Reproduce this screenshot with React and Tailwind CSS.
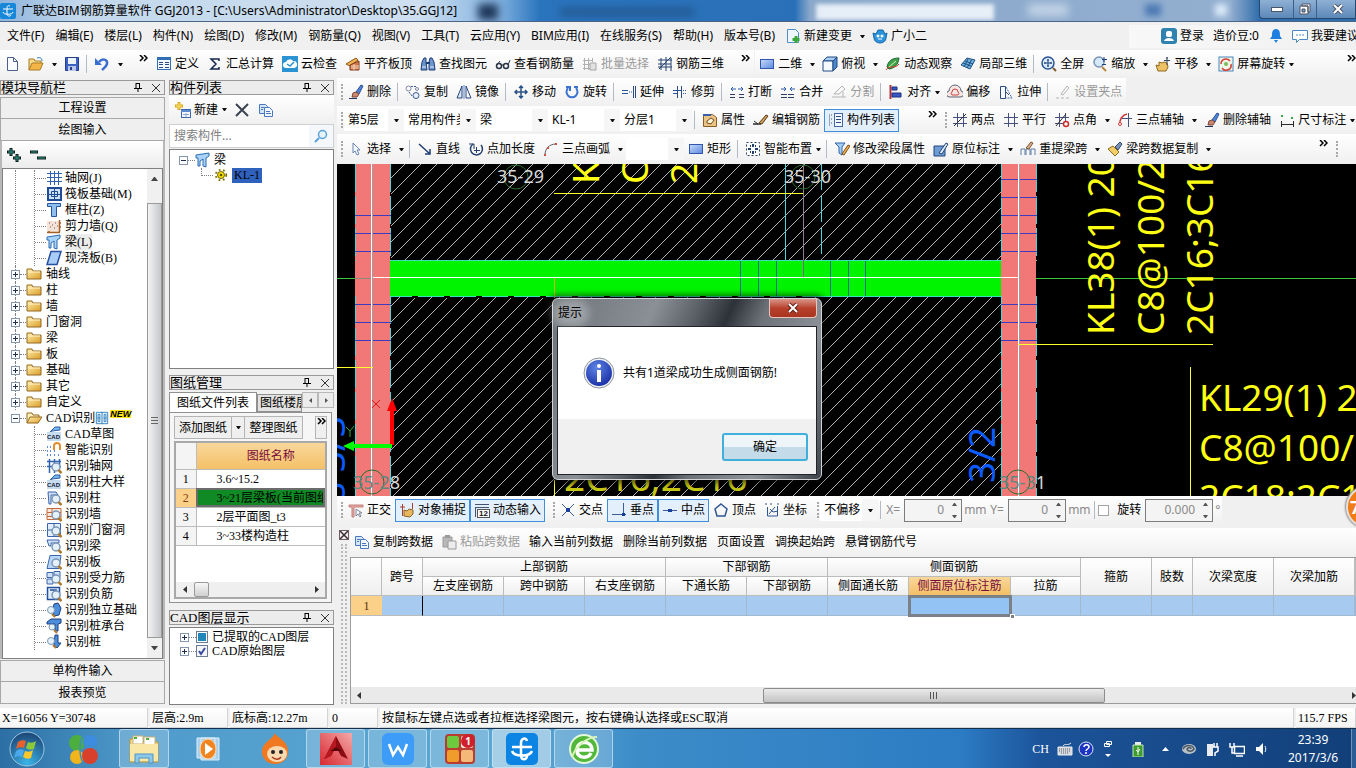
import { Fragment } from "react";

const lens = (
  <>
    <circle cx="10" cy="9" r="4" fill="#e4f1fb" stroke="#7c96b4" strokeWidth="1.500" />
    <path d="M12.500 12l3 3" stroke="#b07a2c" strokeWidth="2.500" />
  </>
);
const brush = (
  <>
    <path d="M1 14.500h8" stroke="#23335c" />
    <path d="M8 8l5-7 2 1-4 8z" fill="#4d86d8" stroke="#2d4f94" />
    <path d="M4 13l1-4 3-1 3 2-2 3z" fill="#c98a74" stroke="#7c4435" />
  </>
);
const copyDoc = (
  <>
    <path d="M1.500 2.500h6l2 2v7h-8z" fill="#d5e6fa" stroke="#4a78c0" />
    <path d="M6.500 5.500h5l3 3v6h-8z" fill="#f2f8ff" stroke="#4a78c0" />
    <path d="M8 9.500h4M8 11.500h5M3 5.500h3M3 7.500h2" stroke="#4a78c0" />
  </>
);
const axis = <path d="M5.500 1v14M11.500 1v14M1 5.500h14M1 11.500h14" stroke="#45507c" fill="none" />;
const cad = (
  <>
    <path d="M2 8L9 1l5 0v3l-8 1z" fill="#79b4ec" stroke="#2a5ca8" />
    <rect x="1" y="6" width="14" height="9" fill="#c9dbee" />
    <text x="1" y="13" fontSize="6" fontWeight="bold" fontFamily="'Liberation Sans', sans-serif" fill="#111c33">CAD</text>
  </>
);
const blueRect = <rect x="1.500" y="3.500" width="13" height="9" fill="url(#blueFill)" stroke="#3156b0" />;

const icons = {
  file: <path d="M3.500 1.500h6l4 4v9h-10zM9.500 1.500v4h4" fill="#f8fbff" stroke="#4b5f8a" />,
  open: (
    <>
      <path d="M1 14V3h5l1 2h6v3" fill="#f7dc8c" stroke="#a97b25" />
      <path d="M1 14l3-7h11l-3 7z" fill="#f3b647" stroke="#a97b25" />
      <path d="M9 2c3-1 5 0 5 3" fill="none" stroke="#2a7fb8" />
    </>
  ),
  save: (
    <>
      <path d="M1.500 1.500h13v13h-13z" fill="#3c62c4" stroke="#24408c" />
      <path d="M4 2h8v6H4z" fill="#eef3fc" />
      <path d="M4 10h8v5H4z" fill="#b9c8e8" />
      <path d="M6 11h2v3H6z" fill="#24408c" />
    </>
  ),
  undo: (
    <>
      <path d="M5 6c3-4 9-3 8 2-1 3-3 4-5 6" fill="none" stroke="#3a6fd0" strokeWidth="2.500" />
      <path d="M1 2v7h7z" fill="#3a6fd0" />
    </>
  ),
  define: (
    <>
      <rect x="1.500" y="1.500" width="13" height="12" fill="#f4f9ff" stroke="#2f6fb4" />
      <path d="M1 3h14" stroke="#2f6fb4" strokeWidth="2" />
      <path d="M3 6.500h4M3 8.500h4M3 11.500h4M9 6.500h4M9 8.500h4M9 11.500h4" stroke="#274a84" />
    </>
  ),
  sum: <path d="M12 5V3H4l5 5-5 5h8v-2" fill="none" stroke="#16294c" strokeWidth="1.500" />,
  cloud: (
    <>
      <rect width="16" height="16" fill="#2b93d1" />
      <path d="M4 12a3 3 0 010-6 4 4 0 017-1 3.500 3.500 0 011 7z" fill="#fff" />
      <path d="M5 8l3 2 4-4" fill="none" stroke="#2b93d1" strokeWidth="1.500" />
    </>
  ),
  flush: (
    <>
      <path d="M1 8l10-6 2 2-8 6z" fill="#f0b354" stroke="#8f5a14" />
      <path d="M5 14V9l9-4v9z" fill="#d4784c" stroke="#7e3c1c" />
      <path d="M6 10h8M6 12h8M9 8v6" stroke="#f4d6c0" />
    </>
  ),
  find: (
    <>
      <path d="M4 2h2v4l1 8H1l1-8zM10 2h2l2 4 1 8H9V6z" fill="#6c96cc" stroke="#1e3c74" />
      <path d="M6 7h4" stroke="#1e3c74" strokeWidth="2" />
      <path d="M2 11h4M10 11h4" stroke="#dce8f8" />
    </>
  ),
  glasses: (
    <>
      <circle cx="4" cy="10" r="2.500" fill="none" stroke="#2a3646" strokeWidth="1.500" />
      <circle cx="11" cy="10" r="2.500" fill="none" stroke="#2a3646" strokeWidth="1.500" />
      <path d="M6 9h3M2 9l3-4M13 9l2-5" stroke="#2a3646" fill="none" />
    </>
  ),
  batch: (
    <>
      <path d="M2.500 2v12M6.500 2v12M1 4.500h9M1 8.500h13M1 12.500h9M10.500 2v4" stroke="#b0b0b0" />
      <path d="M8 7h6v7H8z" fill="#e2e2e2" stroke="#a5a5a5" />
    </>
  ),
  rebar3d: <path d="M1 4h14M1 11h14M4 2v12M9 1v14M14 2v13M2 13L14 1M1 8h13" stroke="#26446f" fill="none" />,
  rect: blueRect,
  cube: (
    <>
      <path d="M1 5l4-4h10l-4 4z" fill="#a8cdf2" stroke="#234a84" />
      <path d="M1 5h10v10H1z" fill="#f5faff" stroke="#234a84" />
      <path d="M11 5l4-4v10l-4 4z" fill="#4d8acb" stroke="#234a84" />
    </>
  ),
  orbit: (
    <>
      <path d="M2 11c1-6 5-9 12-9-1 7-4 10-10 11z" fill="#3ea34b" stroke="#1c6430" />
      <path d="M4 11l7-6" stroke="#d6f0c4" />
      <path d="M1 14c2-5 10-1 13-6" stroke="#d04030" fill="none" />
    </>
  ),
  partial: (
    <>
      <path d="M1 9l6-7 8 2-5 9z" fill="#6eb0dc" stroke="#1f4f84" />
      <path d="M3 7l8 3M5 5l8 3M8 3L4 11M12 3L7 12" stroke="#1f4f84" />
    </>
  ),
  full: (
    <>
      <circle cx="7" cy="7" r="6" fill="#dcecfb" stroke="#2a5494" strokeWidth="1.500" />
      <path d="M7 3v8M3 7h8M6 4h2M6 10h2M4 6v2M10 6v2" stroke="#20407c" />
      <path d="M12 12l3 3" stroke="#7c5a2c" strokeWidth="2" />
    </>
  ),
  zoom: (
    <>
      <circle cx="7" cy="6" r="5" fill="#d6e9fa" stroke="#7a94b4" strokeWidth="1.500" />
      <path d="M10 11l4 4" stroke="#b8863c" strokeWidth="2" />
      <path d="M12 1v5M10 3.500h5M10 8.500h4" stroke="#20407c" />
    </>
  ),
  hand: (
    <>
      <path d="M3 15l-2-6 3 1V6l3 1 2-1 3 1 1 4-2 4z" fill="#edc266" stroke="#94691c" />
      <path d="M12 1v8M9 4.500h6M11 2h2" stroke="#35455e" />
    </>
  ),
  spin: (
    <>
      <rect x="1" y="1" width="14" height="14" fill="#eef6e8" stroke="#4886b8" />
      <path d="M3 8a5 5 0 019-3M13 8a5 5 0 01-9 4" fill="none" stroke="#d8413c" strokeWidth="1.500" />
      <circle cx="8" cy="8" r="2" fill="#7cbc58" />
    </>
  ),
  brush,
  copy: (
    <>
      <circle cx="3.500" cy="4.500" r="2.500" fill="none" stroke="#7f8aa0" />
      <circle cx="12" cy="5" r="1.500" fill="none" stroke="#7f8aa0" />
      <circle cx="11" cy="11.500" r="3" fill="#e8f0fa" stroke="#3c5a94" />
      <path d="M6 2.500h5M4 8l3 4" stroke="#3c5a94" strokeDasharray="2 1" />
    </>
  ),
  mirror: (
    <>
      <path d="M6 2v12H1z" fill="#dce8f8" stroke="#2a4780" />
      <path d="M10 2v12h5z" fill="none" stroke="#2a4780" />
      <path d="M8 1v14" stroke="#5c86c4" />
    </>
  ),
  move: <path d="M8 2v12M2 8h12M6 4l2-2 2 2M6 12l2 2 2-2M4 6L2 8l2 2M12 6l2 2-2 2" fill="none" stroke="#2a5286" strokeWidth="1.500" />,
  rotate: <path d="M4 4a5.500 5.500 0 108 0M2 3h4v4M10 3h4" fill="none" stroke="#3b74d0" strokeWidth="2" />,
  extend: (
    <>
      <path d="M1 6.500h6M1 9.500h6" stroke="#2857a0" />
      <path d="M8 8h3" stroke="#2857a0" strokeDasharray="1 1" />
      <path d="M12.500 2v12M14.500 2v12" stroke="#2c4c80" />
    </>
  ),
  trim: (
    <>
      <path d="M5.500 2v12M9.500 2v12" stroke="#2c4c80" />
      <path d="M1 6.500h8M1 9.500h4" stroke="#2857a0" />
      <path d="M11 6.500h4M11 9.500h4" stroke="#2857a0" strokeDasharray="1 1" />
    </>
  ),
  breakAt: (
    <>
      <path d="M1 10.500h5M10 10.500h5M1 13.500h5M10 13.500h5" stroke="#2c3d66" />
      <path d="M7 5H2m2-2L2 5l2 2M9 5h5m-2-2l2 2-2 2" stroke="#2c5ea8" fill="none" />
    </>
  ),
  merge: (
    <>
      <path d="M1 10.500h14M1 13.500h14" stroke="#2c3d66" strokeDasharray="6 1" />
      <path d="M1 5h5M4 3l2 2-2 2M15 5h-5m2-2l-2 2 2 2" stroke="#2c5ea8" fill="none" />
    </>
  ),
  split: <path d="M1 13h14M3 10l8-8 3 3-6 5zM12 8v5" stroke="#b4b4b4" fill="none" />,
  align: (
    <>
      <path d="M2.500 1v14" stroke="#b03040" strokeWidth="2" />
      <path d="M4 3h5v3H4zM4 9h9v4H4z" fill="#3758c0" stroke="#1c2e7c" />
    </>
  ),
  offset: (
    <>
      <path d="M3 13a3 3 0 01-1-6 6 6 0 0112 0 3 3 0 01-1 6z" fill="#f8e6e4" stroke="#5b6474" />
      <path d="M5 11a2 2 0 010-3 3 3 0 016 0 2 2 0 010 3z" fill="none" stroke="#c8443c" />
    </>
  ),
  stretch: (
    <>
      <path d="M2.500 2.500h5v12h-5z" fill="#f8fbff" stroke="#2c4c80" />
      <path d="M8 3l6 11H8" fill="none" stroke="#3c68b4" strokeDasharray="2 1" />
      <path d="M8 8l3 3" stroke="#2c4c80" />
    </>
  ),
  gripSet: <path d="M1 14h3M6 14h3M11 14h3M6 10l6-8 2 2-6 7z" stroke="#b4b4b4" fill="none" />,
  props: (
    <>
      <path d="M1.500 2.500h9l4 3v9h-13z" fill="#eac487" stroke="#8a5b24" />
      <path d="M5 9l4-3 3 2-3 4-4-1z" fill="#fff6dc" stroke="#6f4a1c" />
      <path d="M1 3h8" stroke="#3860a8" strokeWidth="2" />
    </>
  ),
  editBar: (
    <>
      <path d="M0 12h8" stroke="#2a2a2a" strokeWidth="1.500" />
      <path d="M6 11l7-8 2 1-6 8z" fill="#c89c58" stroke="#5c3e18" />
      <path d="M1 9l4 3" stroke="#2a2a2a" />
    </>
  ),
  list: (
    <>
      <path d="M1 3h3M1 7h3M1 11h3M1 5h2M1 9h2M1 13h2" stroke="#4c5a7a" strokeDasharray="1 1" />
      <rect x="6.500" y="1.500" width="8" height="13" fill="#f4f8ff" stroke="#4468a4" />
      <path d="M8 4.500h5M8 7.500h5M8 10.500h5" stroke="#2f4a80" />
    </>
  ),
  twoPoint: <>{axis}<path d="M2 14L14 2" stroke="#2b2b2b" /></>,
  parallel: axis,
  pointAngle: <>{axis}<path d="M2 14L12 2" stroke="#2b2b2b" /><circle cx="12" cy="12" r="2.500" fill="#fff" stroke="#d02c2c" strokeWidth="1.500" /></>,
  threeAxis: (
    <>
      <path d="M11.500 1v14M5 6.500h10" stroke="#45507c" />
      <path d="M3 13c-1-5 2-10 7-11" stroke="#d03838" fill="none" strokeWidth="1.500" />
      <circle cx="3" cy="12" r="1.500" fill="#fff" stroke="#d03838" />
    </>
  ),
  dim: (
    <>
      <path d="M2.500 9v6M14.500 9v6M3 12.500h11" stroke="#2b2b2b" />
      <path d="M2 3h2v2H2zM12 5h2v2h-2z" fill="#3da04c" />
    </>
  ),
  cursor: <path d="M5 2v10l2-2 2 4 2-1-2-4h3z" fill="#f6faff" stroke="#6a84b0" />,
  line: <path d="M2 3l11 10M13 8v5H8" fill="none" stroke="#1f3f74" strokeWidth="1.500" />,
  addLen: (
    <>
      <path d="M5 3a6 6 0 108 1" fill="none" stroke="#24406c" strokeWidth="1.500" />
      <path d="M1 3h5v5M8.500 6v6M6 9.500h6" fill="none" stroke="#24406c" />
    </>
  ),
  arc: (
    <>
      <path d="M2 14C2 8 6 3 13 3" fill="none" stroke="#5c5c5c" />
      <path d="M1 13h2v2H1zM4 6h2v2H4zM12 2h2v2h-2z" fill="#d04c3c" />
    </>
  ),
  smart: (
    <>
      <path d="M1.500 1.500h13v13h-13z" fill="#fff" stroke="#24406c" strokeDasharray="2 2" />
      <path d="M8 3v3M8 10v3M3 8h3M10 8h3M5 5h1M10 5h1M5 11h1M10 11h1" stroke="#24406c" strokeWidth="2" />
    </>
  ),
  beamEdit: (
    <>
      <path d="M1 2h10l-3 4v8l-3-2V6z" fill="#a6cdf2" stroke="#2c66ac" />
      <path d="M8 13l6-9 2 1-6 9z" fill="#f2b44c" stroke="#7c4c14" />
    </>
  ),
  origin: (
    <>
      <path d="M1 5h11v10H1z" fill="#6f9cd4" stroke="#23457c" />
      <path d="M6 12l7-10 2 1-6 10z" fill="#dbe9f8" stroke="#23457c" />
    </>
  ),
  respan: (
    <>
      <path d="M1 14V8h4v6M6 14V8h4v6M11 14V8h4v6" fill="none" stroke="#5f7ca4" />
      <path d="M6 7l5-6 2 1-4 6z" fill="#d8b088" stroke="#7c5430" />
    </>
  ),
  sweep: (
    <>
      <path d="M1 8l5-3 6 6-4 4z" fill="#f2cf68" stroke="#8c6a1c" />
      <path d="M8 6l5-5 2 2-4 6z" fill="#7a92b4" stroke="#33486c" />
    </>
  ),
  ortho: (
    <>
      <path d="M1 3h14v2H6v10H4V5H1z" fill="#e9a8a4" stroke="#c4807c" />
      <path d="M8 7v7l2-2 2 3 1-1-2-3h3z" fill="#fff" stroke="#7c8494" />
    </>
  ),
  snap: (
    <>
      <path d="M1 5h5M3.500 2v12M13.500 1v6" stroke="#a83c30" />
      <path d="M5 14V8l3 1 2-2 4 1v4l-3 3z" fill="#e8b860" stroke="#8c6424" />
    </>
  ),
  dynInput: (
    <>
      <path d="M1 2.500h14M1 5.500h14M1.500 5v10" stroke="#44546c" />
      <rect x="3.500" y="7.500" width="12" height="8" fill="#fff" stroke="#555" />
      <text x="5" y="14" fontSize="8" fontWeight="bold" fontFamily="'Liberation Sans', sans-serif" fill="#111">12</text>
    </>
  ),
  cross: <><path d="M2 2l12 12M14 2L2 14" stroke="#3d5d98" /><path d="M6 6h4v4H6z" fill="#173f9c" /></>,
  perp: <><path d="M12.500 1v12M1 12.500h14" stroke="#3d5d98" /><path d="M11 11h3v3h-3z" fill="#173f9c" /></>,
  mid: <><path d="M1 8.500h14" stroke="#3d5d98" /><path d="M6 7h4v3H6z" fill="#173f9c" /></>,
  penta: <path d="M8 2l6 5-2 7H4L2 7z" fill="none" stroke="#2f5594" strokeWidth="1.500" />,
  coord: (
    <>
      <path d="M3.500 5v9h10M5 12l6-7M6 7l3 3 5-1M13.500 4v10" fill="none" stroke="#2f5594" />
      <path d="M1 2h2M6 2h2M13 2h2" stroke="#2f5594" />
    </>
  ),
  copyDoc,
  paste: (
    <>
      <path d="M2 3h9v10H2z" fill="#b8b8b8" stroke="#9a9a9a" />
      <path d="M7 7h8v8H7z" fill="#ececec" stroke="#9a9a9a" />
      <path d="M4 1h5v3H4z" fill="#9a9a9a" />
    </>
  ),
  newChange: (
    <>
      <path d="M2.500 1.500h8l3 3v10h-11z" fill="#eef7ff" stroke="#4b8fc8" />
      <path d="M11 8v7M7.500 11.500h7" stroke="#3aa53a" strokeWidth="3" />
    </>
  ),
  mascot: (
    <>
      <path d="M1 5l3 1 2-4h5l2 4 2-1-1 5a6 5 0 01-12 0z" fill="#2a93dc" stroke="#1466a4" />
      <circle cx="6" cy="8" r="1.500" fill="#fff" />
      <circle cx="10" cy="8" r="1.500" fill="#fff" />
      <path d="M6 11h4" stroke="#fff" />
    </>
  ),
  login: (
    <>
      <rect width="16" height="16" rx="3" fill="#2f83ae" />
      <rect x="5" y="3" width="6" height="6" rx="2" fill="#fff" />
      <path d="M3 13c1-4 9-4 10 0z" fill="#fff" />
    </>
  ),
  bell: <path d="M8 1c4 0 4 4 4 7l2 3H2l2-3c0-3 0-7 4-7zM6 12h4l-2 3z" fill="#1f7fe0" />,
  chat: (
    <>
      <path d="M.5 2.500h15v9h-8l-3 3v-3h-4z" fill="#fff" stroke="#4a87c4" />
      <path d="M4 7h9" stroke="#4a87c4" strokeDasharray="2 1" />
    </>
  ),
  newItem: (
    <>
      <path d="M4 0v8M0 4h8" stroke="#d8a820" strokeWidth="3" />
      <path d="M4 1v6M1 4h6" stroke="#ffe870" />
      <rect x="6.500" y="7.500" width="9" height="8" fill="#f4f8ff" stroke="#3c68b0" />
      <path d="M6 9h10" stroke="#5c8ad0" strokeWidth="2" />
      <path d="M8 12.500h6M11 11v4" stroke="#8caad8" />
    </>
  ),
  del: <path d="M2 2l12 12M14 2L2 14" stroke="#3b4250" strokeWidth="2" />,
  search: (
    <>
      <circle cx="9.500" cy="6.500" r="4" fill="#e6f3fc" stroke="#5aa2d8" strokeWidth="1.500" />
      <path d="M6 10l-4 4" stroke="#5aa2d8" strokeWidth="2" />
    </>
  ),
  folder: (
    <>
      <path d="M1 13V3h5l1 2h8v8z" fill="url(#folderFill)" stroke="#94691f" />
      <path d="M2 6h12" stroke="#fff3c4" />
    </>
  ),
  folderOpen: (
    <>
      <path d="M1 13V3h5l1 2h6v3" fill="#fff2bf" stroke="#94691f" />
      <path d="M1 13l3-6h12l-4 6z" fill="url(#folderFill)" stroke="#94691f" />
    </>
  ),
  grid: <path d="M4.500 1v14M8.500 1v14M12.500 1v14M1 3.500h15M1 7.500h15M1 11.500h15" stroke="#2f62b0" />,
  raft: (
    <>
      <rect x="2" y="2" width="13" height="12" fill="#cfe2fa" stroke="#1f4c94" strokeWidth="2" />
      <path d="M5.500 5.500h6v5h-6zM8.500 2v12M2 8.500h12" fill="none" stroke="#1f4c94" />
    </>
  ),
  column: <path d="M1.500 1.500h13v3h-4v10h-5v-10h-4z" fill="#8fbff0" stroke="#2455a0" />,
  wall: (
    <>
      <path d="M1 3h12v11H1z" fill="#f6e3d6" />
      <path d="M1 14.500h13M13.500 2v12M13 5h2M13 9h2M3 13v2" stroke="#a5602c" strokeWidth="1.500" />
      <path d="M3 5h1M6 7h1M9 5h1M4 9h1M8 10h1M11 8h1" stroke="#5b5b78" />
    </>
  ),
  beam: <path d="M1 3l13-2v3l-3 2v9l-3-1V7L5 9v5H3V6H1z" fill="#a8d2f7" stroke="#2a6cb4" />,
  slab: <path d="M5 1.500h10L11 14.500H1z" fill="#a9cdf6" stroke="#2650a0" strokeWidth="1.500" />,
  cad,
  magnet: (
    <>
      <path d="M1 5h1M4 5h1M1 9h1M4 9h1M8 9h1M1 13h1M4 13h1M8 13h1M12 13h1" stroke="#2f62d0" strokeWidth="1.500" />
      <path d="M8 8V4a3 3 0 016 0v4" fill="none" stroke="#e09030" strokeWidth="2" />
    </>
  ),
  idGrid: <><path d="M3.500 1v14M8.500 1v14M1 3.500h14M1 8.500h14M13.500 1v6" stroke="#2f62b0" strokeWidth="1.500" />{lens}</>,
  idColumn: <><path d="M2 2h8l2 3H5v9H3z" fill="#cfe2fa" stroke="#3a64ac" />{lens}</>,
  idWall: <><path d="M1 2.500h14v11H1zM1 6.500h14M1 10.500h14M6 2v4M10 6v4" fill="#fae8dc" stroke="#c06a3c" />{lens}</>,
  idDoor: <><path d="M1.500 1.500h13v13h-13zM8 1v14M1 8h14" fill="#e2eefc" stroke="#3a64ac" />{lens}</>,
  idBeam: <><path d="M1 2h12v3H5v3H3z" fill="#cfe2fa" stroke="#3a64ac" />{lens}</>,
  idSlab: <><path d="M4 1.500h11l-2 13H1z" fill="#b8d7f8" stroke="#3a64ac" />{lens}</>,
  idForce: <><path d="M1 2.500h6v5H1zM8 1.500h6v6H8zM1 9h6v5H1z" fill="#cfe2fa" stroke="#3a64ac" />{lens}</>,
  idNeg: <><path d="M1.500 1.500h12v12h-12zM4 4h6v6" fill="#e2eefc" stroke="#24509c" strokeWidth="1.500" />{lens}</>,
  idFound: (
    <>
      <path d="M7 7l1-5 4-1 3 5-2 7-5 1z" fill="#4c8edc" stroke="#1c3f80" />
      <circle cx="5" cy="8" r="3.500" fill="#e4f1fb" stroke="#7c96b4" />
      <path d="M6 12l3 3" stroke="#b07a2c" strokeWidth="2" />
    </>
  ),
  idCap: (
    <>
      <path d="M1 4l4-3h10v4l-3 1v7H9V6H1z" fill="#4c8edc" stroke="#1c3f80" />
      <circle cx="6" cy="9" r="3" fill="#e4f1fb" stroke="#7c96b4" />
      <path d="M8 12l3 3" stroke="#b07a2c" strokeWidth="2" />
    </>
  ),
  idPile: (
    <>
      <path d="M9 1h3v8h3l-4 5-3-3z" fill="#4c8edc" stroke="#1c3f80" />
      <circle cx="5" cy="7" r="3.500" fill="#e4f1fb" stroke="#7c96b4" />
      <path d="M7 11l3 3" stroke="#b07a2c" strokeWidth="2" />
    </>
  ),
  gear: (
    <>
      <circle cx="8" cy="8" r="4" fill="#f5e000" stroke="#5c5200" />
      <circle cx="8" cy="8" r="6" fill="none" stroke="#7c7000" strokeWidth="2" strokeDasharray="2 3" />
      <circle cx="8" cy="8" r="1.500" fill="#5c5200" />
    </>
  ),
  book: <path d="M1.500 1.500h13v13h-13zM8 1v14M3.500 4v8h2V4zM10.500 4v8h2V4zM3 8h3M10 8h3" fill="#dff0fb" stroke="#2d7cb8" />,
};

function Icon({ name, className = "size-4" }) {
  return (
    <svg viewBox="0 0 16 16" fill="none" aria-hidden="true" className={`shrink-0 ${className}`}>
      {icons[name]}
    </svg>
  );
}

function Caret() {
  return (
    <svg viewBox="0 0 5 3" className="h-[3px] w-[5px] shrink-0" aria-hidden="true">
      <path d="M0 0h5L3 3H2z" fill="#111" />
    </svg>
  );
}

function Tool({ icon, label, active, disabled, arrow }) {
  return (
    <>
      <button
        type="button"
        aria-label={label || icon}
        disabled={disabled}
        className={`flex h-[23px] shrink-0 items-center gap-[3px] px-1 whitespace-nowrap ${
          active ? "bg-[#e3effb] outline-1 -outline-offset-1 outline-[#3f8fdd]" : ""
        } ${disabled ? "text-[#9a9a9a]" : ""}`}
      >
        <Icon name={icon} />
        {label}
      </button>
      {arrow && (
        <button
          type="button"
          aria-label="更多"
          className={`flex h-5 shrink-0 items-center ${arrow === "tight" ? "w-2" : "w-3 justify-center"}`}
        >
          <Caret />
        </button>
      )}
    </>
  );
}

const Sep = () => <span className="mx-[2px] h-[18px] w-px shrink-0 border-l border-[#b4bac4] pr-px" />;
const Grip = ({ className = "ml-1" }) => (
  <span className={`mr-px h-4 w-[2px] shrink-0 border-l-2 border-dotted border-[#a8a8a8] ${className}`} />
);
const Chevrons = ({ className = "w-[26px] pr-1" }) => (
  <button type="button" aria-label="展开" className={`flex h-5 shrink-0 items-start justify-end ${className}`}>
    <svg viewBox="0 0 9 7" className="mt-px h-[7px] w-[9px]" aria-hidden="true">
      <path d="M1 0l3 3-3 3M5 0l3 3-3 3" fill="none" stroke="#000" strokeWidth="1.500" />
    </svg>
  </button>
);

function Combo({ label, value, className }) {
  return (
    <span className={`flex h-[22px] shrink-0 items-center bg-white ${className}`}>
      <select aria-label={label} className="h-full w-full min-w-0 appearance-none overflow-hidden pl-1 outline-none">
        <option>{value}</option>
      </select>
      <span className="flex h-full w-4 shrink-0 items-center justify-center bg-[#f6f6f6]">
        <Caret />
      </span>
    </span>
  );
}

// "|" is a separator, the third field marks the kind of drop arrow
function Tools({ items }) {
  return items.map((item, i) =>
    item === "|" ? (
      <Sep key={i} />
    ) : (
      <Tool key={i} icon={item[0]} label={item[1]} arrow={item[2]} disabled={item[3]} />
    )
  );
}

const bar = "flex shrink-0 items-center bg-gradient-to-b from-white to-[#f0f0f0]";
const song = "[font-family:'Liberation_Serif','Noto_Sans_CJK_SC',serif]";
const yahei = "[font-family:'Noto_Sans','Noto_Sans_CJK_SC',sans-serif]";

function TitleBar() {
  return (
    <header className="relative flex h-[22px] shrink-0 items-center overflow-hidden border-b border-[#4b6487] bg-[linear-gradient(90deg,#8fb4dc_0,#c3d8ec_80px,#cddff0_420px,#7fb0df_500px,#2a74bd_540px,#2a70b8_795px,#8aa8cb_810px,#93afd0_1230px,#2f6cab_1260px)]">
      <span className="absolute left-[478px] top-1 h-4 w-5 bg-[#1d3557] blur-[4px]" />
      <span className="absolute left-[560px] top-2 h-2 w-[134px] bg-[#23588f] blur-[4px]" />
      <span className="absolute left-[816px] top-1 h-4 w-[178px] bg-[#e6eef7] blur-[2px]" />
      <span className="absolute left-[1028px] top-1 h-3 w-10 bg-[#c2d3e6] blur-[4px]" />
      <span className="absolute left-[1145px] top-1 h-3 w-4 bg-[#4d7bb5] blur-[3px]" />
      <span className="absolute left-[1215px] top-1 h-3 w-3 bg-[#dcebfa] blur-[3px]" />
      <svg viewBox="0 0 16 16" className="relative size-4 shrink-0" aria-hidden="true">
        <rect width="16" height="16" rx="2" fill="#1687d9" />
        <path d="M10 3c-3-1-3 1-3 3v5c0 2 3 3 4 1M3 6h10M3 9c0 3 10 3 10 0" fill="none" stroke="#fff" />
      </svg>
      <h1 className="relative ml-[5px] whitespace-nowrap text-xs">
        广联达BIM钢筋算量软件 GGJ2013 - [C:\Users\Administrator\Desktop\35.GGJ12]
      </h1>
      <div className="relative ml-auto flex h-[19px] self-start rounded-bl border border-t-0 border-[#28496e] bg-gradient-to-b from-[#8fb0d4] to-[#5c88b8] text-white">
        <button type="button" aria-label="最小化" className="flex w-[34px] items-center justify-center border-r border-[#3c5f88]">
          <span className="h-[5px] w-3 border border-[#4a5565] bg-white" />
        </button>
        <button type="button" aria-label="还原" className="flex w-[23px] items-center justify-center border-r border-[#3c5f88]">
          <svg viewBox="0 0 12 12" className="size-3" aria-hidden="true">
            <path d="M3 1h8v8H9V3H3zM1 3h8v8H1zm2 3v3h3V6z" fill="#fff" stroke="#4a5565" fillRule="evenodd" />
          </svg>
        </button>
        <button type="button" aria-label="关闭" className="flex w-[38px] items-center justify-center pl-1">
          <svg viewBox="0 0 12 10" className="h-[10px] w-3" aria-hidden="true">
            <path d="M2 1l8 8M10 1L2 9" stroke="#4a5565" strokeWidth="4" />
            <path d="M2 1l8 8M10 1L2 9" stroke="#fff" strokeWidth="2" />
          </svg>
        </button>
      </div>
    </header>
  );
}

const menus = [
  "文件(F)", "编辑(E)", "楼层(L)", "构件(N)", "绘图(D)", "修改(M)", "钢筋量(Q)", "视图(V)",
  "工具(T)", "云应用(Y)", "BIM应用(I)", "在线服务(S)", "帮助(H)", "版本号(B)",
];

function MenuBar() {
  return (
    <nav className="flex h-7 shrink-0 items-center overflow-hidden bg-[#f0f0f0] pl-[2px]">
      {menus.map((m) => (
        <button key={m} type="button" className="shrink-0 pr-[6px] pl-[5px] whitespace-nowrap">
          {m}
        </button>
      ))}
      <Tool icon="newChange" label="新建变更" arrow="split" />
      <Tool icon="mascot" label="广小二" />
      <div className="ml-auto flex shrink-0 items-center bg-gradient-to-r from-[#f8f8f8] to-[#f0f0f0] pl-7">
        <Tool icon="login" label="登录" />
        <button type="button" className="px-[5px] whitespace-nowrap">造价豆:0</button>
        <Tool icon="bell" />
        <div className="w-[68px] overflow-hidden">
          <Tool icon="chat" label="我要建议" />
        </div>
      </div>
    </nav>
  );
}

function MainToolbar() {
  return (
    <div className="flex h-7 shrink-0 overflow-hidden">
      <div className={bar}>
        <Tool icon="file" />
        <Tool icon="open" arrow="split" />
        <Tool icon="save" />
        <Sep />
        <Tool icon="undo" arrow="split" />
        <Chevrons />
      </div>
      <div className={bar}>
        <Tools
          items={[
            ["define", "定义"], ["sum", "汇总计算"], ["cloud", "云检查"], ["flush", "平齐板顶"],
            ["find", "查找图元"], ["glasses", "查看钢筋量"], ["batch", "批量选择", null, true], ["rebar3d", "钢筋三维"],
          ]}
        />
        <Chevrons />
      </div>
      <div className={`${bar} ml-px flex-1`}>
        <Tools
          items={[
            ["rect", "二维", "split"], ["cube", "俯视", "split"], ["orbit", "动态观察"], ["partial", "局部三维"], "|",
            ["full", "全屏"], ["zoom", "缩放", "split"], ["hand", "平移", "split"], ["spin", "屏幕旋转", "tight"],
          ]}
        />
        <Chevrons className="ml-auto w-[26px]" />
      </div>
    </div>
  );
}

function PanelHeader({ title }) {
  return (
    <div className={`flex h-[15px] shrink-0 items-center border border-[#9a9a9a] bg-[#ececec] ${song}`}>
      <h2 className="whitespace-nowrap text-[13px] leading-none">{title}</h2>
      <button type="button" aria-label="固定" className="ml-auto mr-[10px]">
        <svg viewBox="0 0 8 9" className="h-[9px] w-2" aria-hidden="true">
          <path d="M2 0v5M5.500 0v5M2 .5h4M0 5.500h8M4 6v3" stroke="#000" fill="none" />
          <path d="M5 0h1v5H5z" />
        </svg>
      </button>
      <button type="button" aria-label="关闭" className="mr-1">
        <svg viewBox="0 0 8 8" className="size-2" aria-hidden="true">
          <path d="M0 0l8 8M8 0L0 8" stroke="#333" />
        </svg>
      </button>
    </div>
  );
}

const topLeaves = [
  ["grid", "轴网(J)"], ["raft", "筏板基础(M)"], ["column", "框柱(Z)"],
  ["wall", "剪力墙(Q)"], ["beam", "梁(L)"], ["slab", "现浇板(B)"],
];
const folders = ["轴线", "柱", "墙", "门窗洞", "梁", "板", "基础", "其它", "自定义"];
const cadLeaves = [
  ["cad", "CAD草图"], ["magnet", "智能识别"], ["idGrid", "识别轴网"], ["cad", "识别柱大样"], ["idColumn", "识别柱"],
  ["idWall", "识别墙"], ["idDoor", "识别门窗洞"], ["idBeam", "识别梁"], ["idSlab", "识别板"], ["idForce", "识别受力筋"],
  ["idNeg", "识别负筋"], ["idFound", "识别独立基础"], ["idCap", "识别桩承台"], ["idPile", "识别桩"],
];

function Leaves({ items }) {
  return (
    <ul className="ml-[18px] border-l border-dotted border-[#808080]">
      {items.map(([icon, label]) => (
        <li key={label} className="flex h-4 items-center whitespace-nowrap">
          <span className="w-[11px] border-t border-dotted border-[#808080]" />
          <Icon name={icon} className="mr-[3px] size-4" />
          <span className={label === "梁(L)" ? "bg-[#ececec]" : ""}>{label}</span>
        </li>
      ))}
    </ul>
  );
}

function Toggle({ open }) {
  return (
    <button
      type="button"
      aria-label={open ? "收起" : "展开"}
      className="flex size-[9px] shrink-0 items-center justify-center border border-[#8496b0] bg-white"
    >
      <svg viewBox="0 0 5 5" className="size-[5px]" aria-hidden="true">
        <path d={open ? "M0 2.500h5" : "M0 2.500h5M2.500 0v5"} stroke="#1e2f50" />
      </svg>
    </button>
  );
}

const navButton = "h-[22px] shrink-0 border border-[#a8a8a8] bg-[#efefef] text-center";

function ModuleNav() {
  return (
    <aside className={`flex w-[165px] shrink-0 flex-col ${song}`}>
      <PanelHeader title="模块导航栏" />
      <button type="button" className={`mt-[2px] ${navButton}`}>工程设置</button>
      <button type="button" className={`border-t-0 ${navButton}`}>绘图输入</button>
      <div className="flex min-h-0 flex-1 flex-col border-x-2 border-[#b8b8b8]">
        <div className="flex h-[27px] shrink-0 items-center gap-2 bg-gradient-to-b from-white to-[#ececec] pl-1">
          <button type="button" aria-label="全部展开">
            <svg viewBox="0 0 16 14" className="h-[14px] w-4" aria-hidden="true">
              <path d="M5 0v8M1 4h8M11 6v8M7 10h8" stroke="#0c1c1c" strokeWidth="3" />
              <path d="M5 1v6M2 4h6M11 7v6M8 10h6" stroke="#2c9c88" />
            </svg>
          </button>
          <button type="button" aria-label="全部收起">
            <svg viewBox="0 0 16 14" className="h-[14px] w-4" aria-hidden="true">
              <path d="M0 4h8M7 10h9" stroke="#0c1c1c" strokeWidth="3" />
              <path d="M1 4h6M8 10h7" stroke="#2c9c88" />
            </svg>
          </button>
        </div>
        <div className="flex flex-1 border border-[#808080] bg-white">
          <ul className="ml-3 flex-1 pt-px">
            <li className="border-l border-dotted border-[#808080]">
              <Leaves items={topLeaves} />
            </li>
            {folders.map((f) => (
              <li key={f} className="border-l border-dotted border-[#808080]">
                <div className="-ml-[5px] flex h-4 items-center whitespace-nowrap">
                  <Toggle />
                  <span className="w-[6px] border-t border-dotted border-[#808080]" />
                  <Icon name="folder" className="mr-1 size-4" />
                  {f}
                </div>
              </li>
            ))}
            <li className="border-l border-transparent">
              <div className="-ml-[5px] flex h-4 items-center whitespace-nowrap">
                <Toggle open />
                <span className="w-[6px] border-t border-dotted border-[#808080]" />
                <Icon name="folderOpen" className="mr-1 size-4" />
                CAD识别
                <Icon name="book" className="-mr-px ml-0 size-[14px]" />
                <span className="ml-[2px] h-2 self-start bg-[#ffe81a] text-[9px] leading-2 font-bold italic [font-family:'Liberation_Sans',sans-serif]">
                  NEW
                </span>
              </div>
              <Leaves items={cadLeaves} />
            </li>
          </ul>
          <div className="-ml-6 flex w-[15px] shrink-0 flex-col items-center bg-[#f0f0f0]">
            <span className="flex h-[34px] shrink-0 items-start pt-2">
              <svg viewBox="0 0 7 4" className="h-1 w-[7px]" aria-hidden="true"><path d="M0 4l3-4h1l3 4z" fill="#444" /></svg>
            </span>
            <span className="flex w-full flex-1 flex-col items-center justify-center gap-px border border-[#9a9a9a] bg-gradient-to-r from-[#f4f4f4] to-[#c4c6ca]">
              <span className="h-px w-[7px] bg-[#666]" />
              <span className="mt-px h-px w-[7px] bg-[#666]" />
              <span className="mt-px h-px w-[7px] bg-[#666]" />
            </span>
            <span className="flex h-5 shrink-0 items-center">
              <svg viewBox="0 0 7 4" className="h-1 w-[7px]" aria-hidden="true"><path d="M0 0l3 4h1l3-4z" fill="#444" /></svg>
            </span>
          </div>
        </div>
      </div>
      <button type="button" className={`mt-px ${navButton}`}>单构件输入</button>
      <button type="button" className={`mb-1 border-t-0 ${navButton}`}>报表预览</button>
    </aside>
  );
}

const drawings = ["3.6~15.2", "3~21层梁板(当前图纸)", "2层平面图_t3", "3~33楼构造柱"];

function ComponentColumn() {
  return (
    <aside className={`ml-1 flex w-[165px] shrink-0 flex-col ${song}`}>
      <PanelHeader title="构件列表" />
      <div className={`flex h-[29px] shrink-0 items-center bg-gradient-to-b from-white to-[#f0f0f0] pl-[2px] ${yahei}`}>
        <Tool icon="newItem" label="新建" arrow="tight" />
        <Tool icon="del" />
        <Tool icon="copyDoc" />
      </div>
      <div className="flex h-6 shrink-0 border border-[#d0d0d0] bg-[#f4f8fc]">
        <input
          aria-label="搜索构件"
          placeholder="搜索构件..."
          className={`min-w-0 flex-1 bg-white pl-1 placeholder:text-[#808080] ${yahei}`}
        />
        <button type="button" aria-label="搜索" className="flex w-6 items-center justify-center">
          <Icon name="search" />
        </button>
      </div>
      <ul className="mt-px h-[220px] shrink-0 border border-[#808080] bg-white pt-[2px]">
        <li className="ml-[9px]">
          <div className="flex h-4 items-center">
            <Toggle open />
            <span className="w-[7px] border-t border-dotted border-[#808080]" />
            <Icon name="beam" className="mr-[3px] size-4" />
            梁
          </div>
          <div className="ml-[22px] flex h-4 items-start">
            <span className="h-2 w-3 border-b border-l border-dotted border-[#808080]" />
            <Icon name="gear" className="ml-px size-[14px]" />
            <span className="ml-[4px] h-[15px] bg-[#2f62bd] px-[2px] leading-[15px]">KL-1</span>
          </div>
        </li>
      </ul>
      <div className="mt-[6px]">
        <PanelHeader title="图纸管理" />
      </div>
      <div className="mt-[2px] flex h-5 shrink-0 items-end" role="tablist">
        <button type="button" role="tab" aria-selected="true" className="h-5 w-[88px] border border-b-0 border-[#909090] bg-white whitespace-nowrap">
          图纸文件列表
        </button>
        <button type="button" role="tab" className="h-[18px] flex-1 overflow-hidden border border-[#909090] bg-[#e2e2e2] pl-[2px] text-left whitespace-nowrap">
          图纸楼层
        </button>
        <button type="button" aria-label="向左" className="flex h-4 w-4 shrink-0 items-center justify-center self-start border border-[#b8b8b8] bg-[#ececec]">
          <svg viewBox="0 0 3 5" className="h-[5px] w-[3px]" aria-hidden="true"><path d="M3 0v5L0 2.500z" fill="#555" /></svg>
        </button>
        <button type="button" aria-label="向右" className="flex h-4 w-4 shrink-0 items-center justify-center self-start border border-[#b8b8b8] bg-[#ececec]">
          <svg viewBox="0 0 3 5" className="h-[5px] w-[3px]" aria-hidden="true"><path d="M0 0v5l3-2.500z" fill="#555" /></svg>
        </button>
      </div>
      <div className="mr-[2px] h-[191px] shrink-0 border border-[#909090] bg-[#f6f6f6] px-1 py-[3px]">
        <div className={`flex h-[23px] items-stretch ${yahei}`}>
          <button type="button" className="w-[58px] border border-[#b4b4b4] bg-[#efefef] whitespace-nowrap">添加图纸</button>
          <button type="button" aria-label="更多" className="flex w-[13px] items-center justify-center border border-l-0 border-[#b4b4b4] bg-[#efefef]">
            <Caret />
          </button>
          <button type="button" className="w-[58px] border border-l-0 border-[#b4b4b4] bg-[#efefef] whitespace-nowrap">整理图纸</button>
          <span className="ml-auto border border-[#b4b4b4] bg-[#efefef]">
            <Chevrons className="w-[10px]" />
          </span>
        </div>
        <div className="mt-[2px] flex h-[158px] flex-col overflow-hidden border-2 border-[#a8a8a8] bg-white">
          <table className="w-full table-fixed border-collapse">
            <colgroup>
              <col className="w-5" />
              <col />
            </colgroup>
            <thead>
              <tr className="h-[26px]">
                <th className="border-r border-b border-[#bcbcbc] bg-[#f4f4f4]" />
                <th className="border-b border-[#bcbcbc] bg-gradient-to-b from-[#f9d79a] to-[#f3c066] pl-5 font-normal text-[#7a0c3c]">
                  图纸名称
                </th>
              </tr>
            </thead>
            <tbody>
              {drawings.map((name, i) => (
                <tr key={name} className="h-[19px]">
                  <th
                    className={`border-r border-b border-[#bcbcbc] text-center font-normal leading-4 ${
                      i === 1 ? "bg-[#fbd088] text-[#8a3c10]" : "bg-[#f4f4f4]"
                    }`}
                  >
                    {i + 1}
                  </th>
                  <td
                    className={`overflow-hidden border-b border-[#bcbcbc] pl-5 leading-4 whitespace-nowrap ${
                      i === 1 ? "bg-[#0f8a24] outline-2 -outline-offset-2 outline-[#6c6c6c]" : ""
                    }`}
                  >
                    {name}
                  </td>
                </tr>
              ))}
            </tbody>
          </table>
          <div className="mt-auto flex h-[15px] shrink-0 items-center bg-[#efefef]">
            <span className="flex w-[18px] justify-center">
              <svg viewBox="0 0 4 7" className="h-[7px] w-1" aria-hidden="true"><path d="M4 0v7L0 3.500z" fill="#333" /></svg>
            </span>
            <span className="h-full w-[15px] rounded-xs border border-[#9a9a9a] bg-gradient-to-b from-[#f8f8f8] to-[#d0d0d0]" />
            <svg viewBox="0 0 4 7" className="mr-[6px] ml-auto h-[7px] w-1" aria-hidden="true"><path d="M0 0v7l4-3.500z" fill="#333" /></svg>
          </div>
        </div>
      </div>
      <div className="mt-[7px]">
        <PanelHeader title="CAD图层显示" />
      </div>
      <ul className="mt-[2px] mb-[3px] flex-1 border border-[#808080] bg-white pt-[2px]">
        {["已提取的CAD图层", "CAD原始图层"].map((name, i) => (
          <li key={name} className="ml-[10px] flex h-[14px] items-center leading-[14px]">
            <Toggle />
            <span className="w-[7px] border-t border-dotted border-[#808080]" />
            <label className="flex items-center whitespace-nowrap">
              <span className="mr-1 grid size-[12px]">
                <input
                  type="checkbox"
                  defaultChecked
                  className={`col-start-1 row-start-1 size-[12px] appearance-none border border-[#6c7c94] ${
                    i === 0 ? "bg-[#1f88b8] outline-1 -outline-offset-2 outline-white" : "bg-[#f4f6fa]"
                  }`}
                />
                {i === 1 && (
                  <svg viewBox="0 0 12 12" className="pointer-events-none col-start-1 row-start-1 size-[12px]" aria-hidden="true">
                    <path d="M3 6l2 3 4-6" fill="none" stroke="#3a4ca0" strokeWidth="2" />
                  </svg>
                )}
              </span>
              {name}
            </label>
          </li>
        ))}
      </ul>
    </aside>
  );
}

function EditToolbars() {
  return (
    <>
      <div className="flex h-7 shrink-0 overflow-hidden bg-[#f0f0f0]">
        <div className={bar}>
          <Grip />
          <Tools
            items={[
              ["brush", "删除"], "|", ["copy", "复制"], ["mirror", "镜像"], "|", ["move", "移动"], ["rotate", "旋转"], "|",
              ["extend", "延伸"], ["trim", "修剪"], "|", ["breakAt", "打断"], ["merge", "合并"],
              ["split", "分割", null, true], "|", ["align", "对齐", "tight"], ["offset", "偏移"], ["stretch", "拉伸"], "|",
              ["gripSet", "设置夹点", null, true],
            ]}
          />
        </div>
      </div>
      <div className="flex h-7 shrink-0 overflow-hidden">
        <div className={bar}>
          <Grip />
          <Combo label="楼层" value="第5层" className="w-[60px]" />
          <Combo label="构件类别" value="常用构件类型" className="w-[72px]" />
          <Combo label="构件类型" value="梁" className="w-[72px]" />
          <Combo label="构件" value="KL-1" className="w-[72px]" />
          <Combo label="分层" value="分层1" className="w-[72px]" />
          <Sep />
          <Tool icon="props" label="属性" />
          <Tool icon="editBar" label="编辑钢筋" />
          <Tool icon="list" label="构件列表" active />
          <Chevrons className="w-[42px] pr-1" />
        </div>
        <div className={`${bar} flex-1`}>
          <Grip />
          <Tools
            items={[
              ["twoPoint", "两点"], ["parallel", "平行"], ["pointAngle", "点角", "split"], ["threeAxis", "三点辅轴", "split"],
              ["brush", "删除辅轴"], ["dim", "尺寸标注", "tight"],
            ]}
          />
        </div>
      </div>
      <div className={`${bar} h-[30px] overflow-hidden`}>
        <Grip />
        <Tools
          items={[["cursor", "选择", "split"], "|", ["line", "直线"], ["addLen", "点加长度"], ["arc", "三点画弧", "split"]]}
        />
        <Combo label="画法" value="" className="w-[58px]" />
        <Tools
          items={[
            ["rect", "矩形"], "|", ["smart", "智能布置", "tight"], "|", ["beamEdit", "修改梁段属性"],
            ["origin", "原位标注", "split"], ["respan", "重提梁跨", "split"], ["sweep", "梁跨数据复制", "split"],
          ]}
        />
        <Chevrons className="ml-auto w-[26px] pr-1" />
        <Grip />
        <span className="w-[17px] shrink-0" />
      </div>
    </>
  );
}

const hatch = Array.from({ length: 70 }, (_, i) => 393 + i * 16);
const ticks = [215, 233, 251, 304, 322, 340];

// Drawing coordinates are kept in window space, hence the viewBox origin
function Drawing() {
  return (
    <svg
      viewBox="337 164 1019 332"
      preserveAspectRatio="xMinYMin slice"
      className="block h-[332px] w-full bg-black"
      fontFamily="'Noto Sans', sans-serif"
    >
      <defs>
        <clipPath id="hatchArea">
          <path d="M391 164h610v97H391zM391 297h610v199H391z" />
        </clipPath>
      </defs>
      <g clipPath="url(#hatchArea)" stroke="#b4b4b4" shapeRendering="crispEdges">
        {hatch.map((x) => (
          <path key={x} d={`M${x - 164} 164l-332 332`} />
        ))}
      </g>

      {/* side walls */}
      <path d="M355 164h35v332h-35zM1001 164h35v332h-35z" fill="#f27878" />
      <path d="M355.500 164v97M390.500 164v97M355.500 296v200M390.500 296v200" stroke="#46d8d8" strokeDasharray="28 4" />
      <path d="M1001.500 164v97M1036.500 164v97M1001.500 296v200M1036.500 296v200" stroke="#46d8d8" strokeDasharray="28 4" />
      <g stroke="#3c3cc0">
        {ticks.map((y) => (
          <Fragment key={y}>
            <path d={`M355 ${y}.5h36`} />
            <path d={`M1001 ${y}.5h36`} />
          </Fragment>
        ))}
        <path d="M1001 179.500h36M1001 197.500h36" />
      </g>

      {/* beam */}
      <rect x="390" y="261" width="611" height="36" fill="#00f400" />
      <path d="M390 260.500h611M390 296.500h611" stroke="#3ce0c0" />
      <path d="M390 297h432" stroke="#000" strokeDasharray="6 26" strokeWidth="2" strokeDashoffset="-22" />
      <path d="M740.500 261v35M758.500 261v35M776.500 261v35M830.500 261v35M848.500 261v35M865.500 261v35" stroke="#1c6c9c" />
      <path d="M785.500 164v96" stroke="#46d8d8" />
      <path d="M821.500 164v96" stroke="#46d8d8" strokeDasharray="26 6" />
      <path d="M803.500 164v96" stroke="#8c7c8c" />
      <path d="M803.500 260v18" stroke="#8c5c8c" />
      <path d="M337 278.500h18M1036 278.500h320" stroke="#3cc83c" />
      <path d="M355 278.500h16" stroke="#8c8c7c" />
      <path d="M372 277.500h647" stroke="#fff" />
      <path d="M371.500 164v332M1018.500 164v332" stroke="#fff" />
      <path d="M372.500 164v332M1019.500 164v332" stroke="#a89a9a" />

      {/* leader lines */}
      <path d="M337 367.500h36M554 193.500h249M1018 344.500h195M1190.500 367v129M554.500 480v16" stroke="#ffff30" />
      <path d="M554.500 278v20" stroke="#c8b820" />

      {/* axis bubbles */}
      <g fill="none" stroke="#2c6c2c">
        <circle cx="516" cy="177" r="12" />
        <circle cx="803" cy="177" r="12" />
        <circle cx="372" cy="482" r="12" />
        <circle cx="1018" cy="482" r="12" />
      </g>
      <g fontSize="18" fill="#d8d8d8">
        <text x="497" y="183">35-29</text>
        <text x="784" y="183">35-30</text>
        <text x="353" y="489"><tspan fill="#5c8880">35-2</tspan>8</text>
        <text x="999" y="489"><tspan fill="#5c8880">35-3</tspan>1</text>
      </g>

      {/* reinforcement notes */}
      <g fontSize="37" fill="#ffff14">
        <text transform="translate(599 184) rotate(-90)">K</text>
        <text transform="translate(648 184) rotate(-90)">C</text>
        <text transform="translate(697 184) rotate(-90)">2</text>
        <text transform="translate(1114 335) rotate(-90)">KL38(1) 20</text>
        <text transform="translate(1164 335) rotate(-90)">C8@100/2</text>
        <text transform="translate(1213 335) rotate(-90)">2C16;3C16</text>
        <text x="1199" y="411">KL29(1) 2</text>
        <text x="1199" y="461">C8@100/</text>
        <text x="1199" y="511">2C18;2C1</text>
        <text x="564" y="491" fill="#c8c814">2C16;2C16</text>
      </g>
      <g fontSize="37" fill="#0a5cff">
        <text transform="translate(995 483) rotate(-90)">3/2</text>
        <text transform="translate(345 503) rotate(-90)">8 3/3</text>
      </g>

      {/* origin marker */}
      <path d="M390 445v-34h-3l5-13 5 13h-3v34z" fill="#ff0000" />
      <path d="M392 444v4h-38v3l-11-5 11-5v3z" fill="#00ff00" />
      <path d="M372 400l8 8M380 400l-8 8" stroke="#e01c1c" />
      <path d="M346 427l4 4 4-5M350 431v6" stroke="#3ca03c" fill="none" />
    </svg>
  );
}

function MessageDialog() {
  return (
    <div
      role="dialog"
      aria-label="提示"
      className="absolute left-[215px] top-[134px] w-[270px] rounded-md border border-[#d0d4d8] bg-[linear-gradient(115deg,#6c7278_0,#8a9096_30%,#5c6268_42%,#2c3238_52%,#6c7278_62%,#8c9298_80%,#3c4248_100%)] px-1 pb-1 shadow-[0_0_6px_3px_rgba(0,0,0,0.6)]"
    >
      <div className="flex h-[27px] items-center">
        <span className="rounded-full bg-white/30 px-px shadow-[0_0_8px_6px_rgba(255,255,255,0.3)]">提示</span>
        <button
          type="button"
          aria-label="关闭"
          className="ml-auto flex h-[19px] w-[48px] items-center justify-center self-start rounded-b border border-t-0 border-[#e8c4bc] bg-gradient-to-b from-[#d8958a] via-[#b8402c] to-[#a83420]"
        >
          <svg viewBox="0 0 12 10" className="h-[10px] w-3" aria-hidden="true">
            <path d="M2 1l8 8M10 1L2 9" stroke="#5c2018" strokeWidth="4" />
            <path d="M2 1l8 8M10 1L2 9" stroke="#fff" strokeWidth="2" />
          </svg>
        </button>
      </div>
      <div className="border border-[#202428] bg-white">
        <div className="flex h-[92px] items-center gap-2 pl-[25px]">
          <svg viewBox="0 0 32 32" className="size-8" aria-hidden="true">
            <circle cx="16" cy="16" r="15" fill="#f0f2f6" stroke="#8c949c" />
            <circle cx="16" cy="16" r="13" fill="url(#infoFill)" />
            <circle cx="16" cy="9" r="2" fill="#fff" />
            <path d="M14 13h4v12h-4z" fill="#fff" />
          </svg>
          <p className="whitespace-nowrap">共有1道梁成功生成侧面钢筋!</p>
        </div>
        <div className="flex h-[55px] items-center justify-end bg-[#f0f0f0] pr-2">
          <button
            type="button"
            className="h-7 w-[86px] rounded-[3px] border-2 border-[#3fb0dc] bg-gradient-to-b from-[#eef5f9] from-50% to-[#c4dcea] to-50%"
          >
            确定
          </button>
        </div>
      </div>
    </div>
  );
}

function Spin({ label, value, className }) {
  return (
    <span className={`flex h-[23px] shrink-0 items-center border border-[#7c7c7c] bg-[#f4f4f4] pr-1 ${className}`}>
      <input aria-label={label} defaultValue={value} className="w-full min-w-0 pr-2 text-right text-[#8a8a8a] outline-none" />
      <svg viewBox="0 0 5 15" className="h-[15px] w-[5px] shrink-0" aria-hidden="true">
        <path d="M0 3l2-3h1l2 3zM0 12l2 3h1l2-3z" fill="#555" />
      </svg>
    </span>
  );
}

function SnapBar() {
  return (
    <div className="flex h-8 shrink-0 overflow-hidden bg-[#f0f0f0] pb-1">
      <div className={bar}>
        <Grip />
        <Tool icon="ortho" label="正交" />
        <Tool icon="snap" label="对象捕捉" active />
        <Tool icon="dynInput" label="动态输入" active />
        <Grip className="ml-2" />
        <Tool icon="cross" label="交点" />
        <Tool icon="perp" label="垂点" active />
        <Tool icon="mid" label="中点" active />
        <Tool icon="penta" label="顶点" />
        <Tool icon="coord" label="坐标" />
        <Grip className="ml-[6px]" />
        <Combo label="偏移方式" value="不偏移" className="w-[58px]" />
        <Sep />
        <span className="w-5 shrink-0 pl-[2px] text-[#8a8a8a]">X=</span>
        <Spin label="X" value="0" className="w-[58px]" />
        <span className="w-[28px] shrink-0 pl-[2px] text-[#8a8a8a]">mm</span>
        <span className="w-[18px] shrink-0 text-[#8a8a8a]">Y=</span>
        <Spin label="Y" value="0" className="w-[58px]" />
        <span className="w-[26px] shrink-0 pl-[2px] text-[#8a8a8a]">mm</span>
        <Sep />
        <label className="flex shrink-0 items-center gap-2 pr-1">
          <input type="checkbox" className="size-[11px] appearance-none border border-[#a4a4a4] bg-white" />
          旋转
        </label>
        <Spin label="旋转角度" value="0.000" className="w-[68px]" />
        <span className="px-[2px] text-[#8a8a8a]">°</span>
      </div>
    </div>
  );
}

const th = "border-r border-b border-[#bcbcbc] bg-gradient-to-b from-white to-[#efefef] p-0 font-normal leading-4";

function SpanTable() {
  return (
    <section className="flex min-h-0 flex-1 bg-[#f0f0f0]">
      <div className="flex w-[13px] shrink-0 flex-col items-center pt-[2px]">
        <button type="button" aria-label="关闭" className="border border-[#6c5c60]">
          <svg viewBox="0 0 8 8" className="size-2" aria-hidden="true"><path d="M0 0l8 8M8 0L0 8" stroke="#3c2c30" strokeWidth="1.500" /></svg>
        </button>
        <span className="mt-1 mb-1 w-[6px] flex-1 border-x-2 border-dotted border-[#bababa]" />
      </div>
      <div className="flex min-w-0 flex-1 flex-col">
        <div className={`${bar} h-7`}>
          <Tool icon="copyDoc" label="复制跨数据" />
          <Tool icon="paste" label="粘贴跨数据" disabled />
          {["输入当前列数据", "删除当前列数据", "页面设置", "调换起始跨", "悬臂钢筋代号"].map((t) => (
            <button key={t} type="button" className="shrink-0 px-[5px] whitespace-nowrap">{t}</button>
          ))}
        </div>
        <div className={`mt-px mb-1 flex flex-1 flex-col overflow-hidden border-y border-l border-[#9c9c9c] bg-white ${song}`}>
          <table className="w-full table-fixed border-separate border-spacing-0">
            <colgroup>
              <col className="w-[31px]" />
              <col className="w-[41px]" />
              <col className="w-[81px]" />
              <col className="w-[81px]" />
              <col className="w-[81px]" />
              <col className="w-[81px]" />
              <col className="w-[81px]" />
              <col className="w-[81px]" />
              <col className="w-[102px]" />
              <col className="w-[70px]" />
              <col className="w-[71px]" />
              <col className="w-[41px]" />
              <col className="w-[81px]" />
              <col className="w-[81px]" />
              <col />
            </colgroup>
            <thead>
              <tr className="h-[19px]">
                <th rowSpan={2} className={th} />
                <th rowSpan={2} className={th}>跨号</th>
                <th colSpan={3} className={th}>上部钢筋</th>
                <th colSpan={2} className={th}>下部钢筋</th>
                <th colSpan={3} className={th}>侧面钢筋</th>
                <th rowSpan={2} className={th}>箍筋</th>
                <th rowSpan={2} className={th}>肢数</th>
                <th rowSpan={2} className={th}>次梁宽度</th>
                <th rowSpan={2} className={th}>次梁加筋</th>
                <th rowSpan={2} className={th} />
              </tr>
              <tr className="h-[19px]">
                {["左支座钢筋", "跨中钢筋", "右支座钢筋", "下通长筋", "下部钢筋", "侧面通长筋"].map((t) => (
                  <th key={t} className={th}>{t}</th>
                ))}
                <th className="border-r border-b border-[#bcbcbc] bg-gradient-to-b from-[#f9d79a] to-[#f3c066] p-0 font-normal leading-4 whitespace-nowrap text-[#7a0c3c]">
                  侧面原位标注筋
                </th>
                <th className={th}>拉筋</th>
              </tr>
            </thead>
            <tbody>
              <tr className="h-5">
                <th className="border-b border-[#bcbcbc] bg-[#fbd088] p-0 font-normal leading-4 text-[#5c2c10]">1</th>
                <td className="border-r border-b border-r-black border-b-[#bcbcbc] bg-[#a6caf0]" />
                {Array.from({ length: 13 }, (_, i) =>
                  i === 6 ? (
                    <td key={i} className="relative border-b border-[#a0b8d0] bg-[#93c3f5] outline-3 -outline-offset-2 outline-[#7b8088]">
                      <span className="absolute -right-1 -bottom-1 size-[5px] border border-white bg-[#7b8088]" />
                    </td>
                  ) : (
                    <td key={i} className="border-r border-b border-[#a0b8d0] bg-[#a6caf0]" />
                  )
                )}
              </tr>
            </tbody>
          </table>
          <div className="mt-auto flex h-4 shrink-0 items-center bg-[#eaeaea]">
            <svg viewBox="0 0 4 7" className="ml-[6px] h-[7px] w-1 shrink-0" aria-hidden="true"><path d="M4 0v7L0 3.500z" fill="#333" /></svg>
            <span className="ml-[40%] flex h-[15px] w-[34%] items-center justify-center gap-[2px] rounded-xs border border-[#8c8c8c] bg-gradient-to-b from-[#eaeaea] to-[#c4c4c4]">
              <span className="h-[7px] w-px bg-[#555]" />
              <span className="h-[7px] w-px bg-[#555]" />
              <span className="h-[7px] w-px bg-[#555]" />
            </span>
            <svg viewBox="0 0 4 7" className="ml-auto h-[7px] w-1 shrink-0" aria-hidden="true"><path d="M0 0v7l4-3.500z" fill="#333" /></svg>
          </div>
        </div>
      </div>
    </section>
  );
}

function StatusBar() {
  const cell = "flex h-full shrink-0 items-center border-r border-b border-[#d4d4d4] bg-gradient-to-b from-white to-[#f4f4f4] pl-[2px] whitespace-pre";
  return (
    <footer className={`flex h-5 shrink-0 gap-[2px] bg-[#f0f0f0] ${song}`}>
      <span className={`${cell} w-[148px]`}>X=16056 Y=30748</span>
      <span className={`${cell} w-[78px]`}>层高:2.9m</span>
      <span className={`${cell} w-[98px]`}>底标高:12.27m</span>
      <span className={`${cell} w-[48px]`}>0</span>
      <span className={`${cell} flex-1`}>按鼠标左键点选或者拉框选择梁图元，按右键确认选择或ESC取消</span>
      <span className={`${cell} w-[60px]`}>115.7 FPS</span>
    </footer>
  );
}

const taskIcons = {
  clover: (
    <>
      <circle cx="10" cy="10" r="8" fill="#4cae3c" />
      <circle cx="23" cy="9" r="7" fill="#3c8ce0" />
      <circle cx="10" cy="24" r="7" fill="#f0b41c" />
      <circle cx="23" cy="23" r="8" fill="#d8402c" />
      <path d="M16 2c-4 8-4 20 0 28M18 12c4 2 8 2 12 2" fill="none" stroke="#3f8fc4" strokeWidth="1.500" />
    </>
  ),
  explorer: (
    <>
      <path d="M2 6h8l2 3h18v20H2z" fill="#f2d98c" stroke="#b8963c" />
      <path d="M5 3h10v8H5zM16 4h11v8H16z" fill="#fff" stroke="#c8b070" />
      <path d="M6 4h3v2H6zM18 5h3v2h-3z" fill="#4cae3c" />
      <path d="M2 11h28v17H2z" fill="#f9e7a8" />
      <path d="M7 30v-9h18v9h-4v-5H11v5z" fill="#8cc8ec" stroke="#4c94c4" />
    </>
  ),
  media: (
    <>
      <path d="M5 5h18v20H5zM9 5h18v22H9z" fill="#a8d0ec" stroke="#dceefa" />
      <ellipse cx="16" cy="16" rx="8" ry="10" fill="#f08420" stroke="#fcd8ac" />
      <path d="M13 10l8 6-8 6z" fill="#fff" />
    </>
  ),
  monkey: (
    <>
      <path d="M16 0c1 4 12 7 13 17 1 8-5 14-13 14S2 25 3 17C4 9 13 7 16 0z" fill="#f07820" />
      <ellipse cx="18" cy="21" rx="10" ry="8" fill="#fad8b0" />
      <circle cx="14" cy="19" r="2" fill="#222" />
      <circle cx="22" cy="19" r="2" fill="#222" />
      <path d="M13 24c3 3 7 3 9 0" fill="none" stroke="#a83c1c" strokeWidth="1.500" />
    </>
  ),
  acad: (
    <>
      <rect width="32" height="32" fill="url(#redFill)" />
      <path d="M16 3l12 23-7-3-5-9-5 9-7 3z" fill="#8c0c14" />
      <path d="M16 3v11l-5 9-7 3z" fill="#b81820" />
      <path d="M10 18l12 0-6-4z" fill="#5c0408" />
    </>
  ),
  wps: (
    <>
      <rect width="32" height="32" rx="6" fill="#3c9cf8" />
      <path d="M7 11l4 11 5-8 5 8 4-11" fill="none" stroke="#fff" strokeWidth="2.500" />
    </>
  ),
  apps: (
    <>
      <rect x="1" y="1" width="30" height="30" rx="4" fill="#b83c30" />
      <rect x="3" y="3" width="12" height="12" rx="2" fill="#6cc83c" />
      <rect x="17" y="3" width="12" height="12" rx="2" fill="#f0ece0" />
      <rect x="3" y="17" width="12" height="12" rx="2" fill="#f09c2c" />
      <rect x="17" y="17" width="12" height="12" rx="2" fill="#f4b878" />
    </>
  ),
  ggj: (
    <>
      <rect width="32" height="32" rx="5" fill="#0c84e4" />
      <path d="M21 8c-1-4-6-3-6 2v12c0 6 6 5 6 1M6 14h20M6 18c2 6 18 6 20 0" fill="none" stroke="#fff" strokeWidth="2.500" />
    </>
  ),
  browser: (
    <>
      <circle cx="16" cy="16" r="14" fill="#52b83c" stroke="#e4f8d8" strokeWidth="2" />
      <path d="M8 17h16c0-10-15-10-15 0 0 9 11 9 14 3" fill="none" stroke="#fff" strokeWidth="3.500" />
      <path d="M4 24C8 12 20 4 29 4" fill="none" stroke="#d8f4b8" strokeWidth="2" />
    </>
  ),
};

const tasks = [
  ["clover", "工具", "w-[66px]", false],
  ["explorer", "资源管理器", "w-[50px]", true],
  ["media", "播放器", "w-[72px]", false],
  ["monkey", "助手", "w-[56px]", false],
  ["acad", "CAD", "w-[59px]", true],
  ["wps", "文档", "w-[59px]", true],
  ["apps", "应用", "w-[59px]", true],
  ["ggj", "钢筋算量", "w-[59px]", true],
  ["browser", "浏览器", "w-[59px]", true],
];

function Taskbar() {
  return (
    <nav className="flex h-10 shrink-0 items-center overflow-hidden border-t border-[#12304e] bg-[linear-gradient(90deg,#2c6fa4_0,#4f9ccc_140px,#5ca8d4_520px,#3c8cc8_640px,#2c7cc4_960px,#1c549a_1040px,#123f78_100%)] text-white">
      <button type="button" aria-label="开始" className="ml-2 shrink-0">
        <svg viewBox="0 0 38 38" className="size-[38px]" aria-hidden="true">
          <circle cx="19" cy="19" r="17" fill="url(#orbFill)" stroke="#9cc8e4" />
          <path d="M10 12c3-2 5-2 8-1l-2 7c-3-1-5-1-8 1z" fill="#e8602c" />
          <path d="M20 12c3 1 5 1 8-1l-2 8c-3 1-5 1-8-1z" fill="#8cc83c" />
          <path d="M8 21c3-2 5-2 8-1l-2 7c-3-1-5-1-8 1z" fill="#4ca8ec" />
          <path d="M17 21c3 1 5 1 8-1l-2 8c-3 1-5 1-8-1z" fill="#f8c82c" />
        </svg>
      </button>
      <div className="ml-1 flex h-full items-stretch gap-[3px]">
        {tasks.map(([name, label, width, open]) => (
          <button
            key={name}
            type="button"
            aria-label={label}
            className={`relative flex shrink-0 items-center justify-center ${width} ${
              open ? "rounded-[3px] border border-[#cfe6f4]/70" : ""
            } ${name === "ggj" ? "bg-white/45" : open ? "bg-white/20" : ""}`}
          >
            <svg viewBox="0 0 32 32" className="size-8" aria-hidden="true">
              {taskIcons[name]}
            </svg>
            {name === "apps" && (
              <span className="absolute right-[13px] top-1 flex size-[14px] items-center justify-center rounded-full bg-[#d0202c] text-[10px] leading-none font-bold">
                1
              </span>
            )}
          </button>
        ))}
      </div>
      <div className="ml-auto flex shrink-0 items-center">
        <span className={`mr-2 ${song}`}>CH</span>
        <svg viewBox="0 0 16 14" className="mr-[5px] h-[14px] w-4" aria-hidden="true">
          <path d="M1 5h14v8H1z" fill="#d4d8dc" stroke="#e8ecf0" />
          <path d="M2 7h12M2 9h12M4 11h8" stroke="#5c6470" strokeDasharray="1 1" />
          <path d="M6 4c2-3 5 0 8-3" fill="none" stroke="#e8ecf0" />
        </svg>
        <svg viewBox="0 0 16 16" className="mr-[10px] size-4" aria-hidden="true">
          <circle cx="8" cy="8" r="7" fill="#1c34c0" stroke="#dce4f0" />
          <path d="M6 6c0-3 5-3 5 0 0 2-3 2-3 4M8 11v2" fill="none" stroke="#fff" strokeWidth="1.500" />
        </svg>
        <svg viewBox="0 0 8 18" className="mr-5 h-[18px] w-2" aria-hidden="true">
          <path d="M2.500 1.500h5v3h-5zM.5 3.500h5v3h-5z" fill="none" stroke="#fff" />
          <path d="M1 14h6l-3 3z" fill="#fff" />
        </svg>
        <svg viewBox="0 0 12 16" className="mr-[18px] h-4 w-3" aria-hidden="true">
          <path d="M3 1h6v4H3z" fill="#e8ecf0" />
          <path d="M1 4h10v12H1z" fill="#3c9c2c" stroke="#c4e4b8" />
          <path d="M6 6v8M4 9l2 2 2-3" fill="none" stroke="#fff" />
        </svg>
        <svg viewBox="0 0 7 4" className="mr-3 h-1 w-[7px]" aria-hidden="true"><path d="M0 4l3.500-4L7 4z" fill="#fff" /></svg>
        <svg viewBox="0 0 16 14" className="mr-2 h-[14px] w-4" aria-hidden="true">
          <ellipse cx="8" cy="7" rx="7" ry="5" fill="#b8c0c8" />
          <path d="M2 7c3-5 10-4 11 0-2 3-6 3-7 0 1-2 4-2 4 0" fill="none" stroke="#4c5864" strokeWidth="1.500" />
        </svg>
        <svg viewBox="0 0 16 16" className="mr-2 size-4" aria-hidden="true">
          <path d="M2 3h6v12H2z" fill="#e8ecf0" />
          <path d="M8 6h5v4l-3 2v3M9 6V2M12 6V2" stroke="#fff" fill="none" strokeWidth="1.500" />
        </svg>
        <svg viewBox="0 0 16 16" className="mr-[10px] size-4" aria-hidden="true">
          <path d="M5.500 5.500h10v7h-10zM7 15h7M1 2v4h4V2M3 6v6h3" fill="none" stroke="#fff" strokeWidth="1.500" />
        </svg>
        <svg viewBox="0 0 14 14" className="mr-[14px] size-[14px]" aria-hidden="true">
          <path d="M1 5h3l4-4v12L4 9H1z" fill="#fff" />
          <path d="M10 4c1 2 1 4 0 6" fill="none" stroke="#fff" />
        </svg>
        <div className="mr-2 w-[60px] text-center leading-[18px]">
          <div>23:39</div>
          <div>2017/3/6</div>
        </div>
        <button type="button" aria-label="显示桌面" className="h-10 w-[5px] border-l border-[#6c94bc] bg-[#2c5c94]" />
      </div>
    </nav>
  );
}

export default function App() {
  return (
    <div className={`flex min-h-screen flex-col overflow-hidden bg-[#f0f0f0] text-xs text-black ${yahei}`}>
      <svg className="absolute size-0" aria-hidden="true">
        <defs>
          <linearGradient id="blueFill" x1="0" y1="0" x2="1" y2="1">
            <stop offset="0" stopColor="#c8dcfa" />
            <stop offset="1" stopColor="#5c88e0" />
          </linearGradient>
          <linearGradient id="folderFill" x1="0" y1="0" x2="1" y2="1">
            <stop offset="0" stopColor="#fff0b0" />
            <stop offset="1" stopColor="#dc9c28" />
          </linearGradient>
          <linearGradient id="redFill" x1="1" y1="0" x2="0" y2="1">
            <stop offset="0" stopColor="#f4a8a8" />
            <stop offset="1" stopColor="#d82830" />
          </linearGradient>
          <radialGradient id="infoFill" cx="0.400" cy="0.300" r="0.800">
            <stop offset="0" stopColor="#5c84e4" />
            <stop offset="1" stopColor="#1428a0" />
          </radialGradient>
          <radialGradient id="orbFill" cx="0.500" cy="0.900" r="0.900">
            <stop offset="0" stopColor="#3cb4e8" />
            <stop offset="1" stopColor="#1c4474" />
          </radialGradient>
        </defs>
      </svg>
      <TitleBar />
      <MenuBar />
      <MainToolbar />
      <div className="flex min-h-0 flex-1">
        <div className="flex pt-[2px]">
          <ModuleNav />
          <ComponentColumn />
        </div>
        <main className="relative ml-[3px] flex min-w-0 flex-1 flex-col overflow-hidden">
          <EditToolbars />
          <div className="relative shrink-0 overflow-hidden">
            <Drawing />
            <MessageDialog />
          </div>
          <SnapBar />
          <SpanTable />
          <button
            type="button"
            className="absolute -right-8 top-[408px] size-[42px] rounded-full border-2 border-[#e8e0d8] bg-[#f07c18] pl-[2px] text-left text-lg font-bold text-white shadow-[0_0_2px_1px_#8c8c8c]"
          >
            7
          </button>
        </main>
      </div>
      <StatusBar />
      <Taskbar />
    </div>
  );
}
